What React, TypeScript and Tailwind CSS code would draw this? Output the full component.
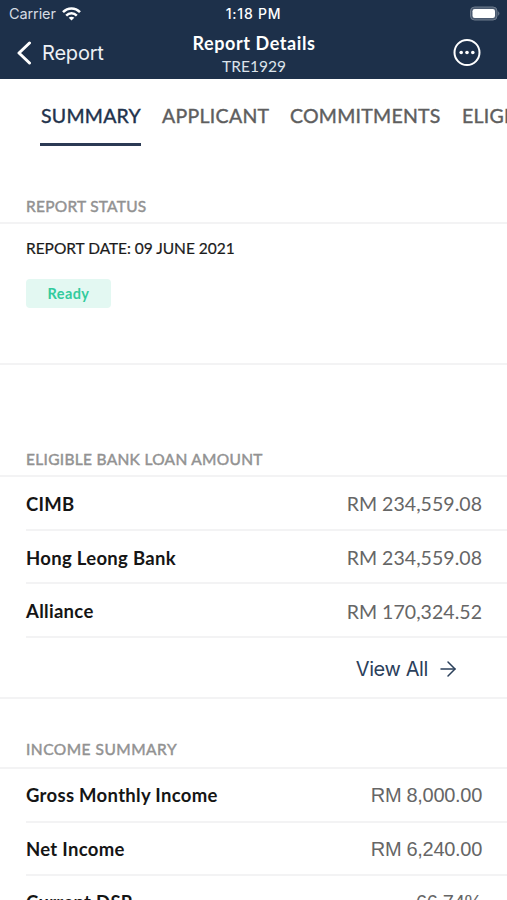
import { ArrowRight } from 'lucide-react';

const tabs = [
  { name: 'SUMMARY', active: true, className: 'w-[101px] tracking-[0.25px] pl-px' },
  { name: 'APPLICANT', active: false, className: 'w-[107px] tracking-[0.3px]' },
  { name: 'COMMITMENTS', active: false, className: 'w-[150px] tracking-[0.25px]' },
  { name: 'ELIGIBILITY', active: false, className: 'w-[110px] tracking-[0.25px] pl-px' },
];

const banks = [
  { name: 'CIMB', amount: 'RM 234,559.08' },
  { name: 'Hong Leong Bank', amount: 'RM 234,559.08' },
  { name: 'Alliance', amount: 'RM 170,324.52' },
];

const incomes = [
  { name: 'Gross Monthly Income', amount: 'RM 8,000.00' },
  { name: 'Net Income', amount: 'RM 6,240.00' },
  { name: 'Current DSR', amount: '66.74%' },
];

const StatusBar = () => (
  <div className="flex h-[27px] items-center justify-between pl-[9px] pr-[7px]">
    <div className="flex w-[118px] items-center gap-[6px] font-['Inter',sans-serif] text-[14.5px] tracking-[-0.1px] text-[#d5dbe3]">
      Carrier
      <svg width="19" height="14" viewBox="0 0 19 14" fill="none" stroke="#fff" strokeWidth="2.5">
        <path d="M1 5.2C5.8.2 13.2.2 18 5.2" />
        <path d="M4.2 8.6c3-3 7.6-3 10.6 0" />
        <path d="M9.5 13.6 6.7 10.8c1.6-1.5 4-1.5 5.6 0Z" fill="#fff" stroke="none" />
      </svg>
    </div>
    <div className="font-['Inter',sans-serif] text-[14px] font-medium tracking-[0.75px]">1:18 PM</div>
    <div className="flex w-[120px] justify-end">
      <svg width="31" height="15" viewBox="0 0 31 15">
        <rect x="1.5" y="1" width="26.5" height="13" rx="4" fill="#4a5a70" stroke="#6d7a8c" />
        <rect x="3.5" y="3" width="22.5" height="9" rx="2.2" fill="#fff" />
        <path d="M29.3 5.3c1.4.8 1.4 3.6 0 4.4Z" fill="#7d899a" />
      </svg>
    </div>
  </div>
);

const Header = () => (
  <header className="h-[79px] bg-[#1d304a] text-white">
    <StatusBar />
    <div className="grid h-[52px] grid-cols-3 items-center pl-[16px] pr-[26px]">
      <button className="flex items-center gap-[10px] text-left font-['Inter',sans-serif] text-[20px] tracking-[-0.2px] text-[#edf1f5]">
        <svg width="16" height="24" viewBox="0 0 16 24" fill="none" stroke="#fff" strokeWidth="3" strokeLinecap="round" strokeLinejoin="round">
          <path d="M13.5 2 3 12l10.5 10" />
        </svg>
        Report
      </button>
      <div className="-mr-[11px] pt-[4px] text-center font-['Lato',sans-serif]">
        <h1 className="whitespace-nowrap text-[18px] font-bold leading-[22px] tracking-[0.6px]">Report Details</h1>
        <p className="text-[15.5px] leading-[24px] text-[#dce3eb]">TRE1929</p>
      </div>
      <div className="flex justify-end">
        <svg width="28" height="28" viewBox="0 0 28 28" fill="none" stroke="#fff" strokeWidth="2">
          <circle cx="14" cy="13.5" r="12.5" />
          <g fill="#fff" stroke="none">
            <circle cx="8.2" cy="13.5" r="1.8" />
            <circle cx="14" cy="13.5" r="1.8" />
            <circle cx="19.8" cy="13.5" r="1.8" />
          </g>
        </svg>
      </div>
    </div>
  </header>
);

const SectionTitle = ({ title, className }: { title: string; className: string }) => (
  <h2 className={`flex items-end border-b-2 border-[#f3f3f4] pl-[26px] text-[15.5px] leading-[20px] text-[#929292] [-webkit-text-stroke:0.45px_#929292] ${className}`}>
    {title}
  </h2>
);

const Row = ({ name, amount, className, amountClass }: { name: string; amount: string; className: string; amountClass: string }) => (
  <div className={`ml-[26px] flex h-[53.7px] items-center justify-between border-b-2 border-[#f3f3f4] pr-[25px] ${className}`}>
    <span className="text-[18.5px] font-bold tracking-[0.3px] text-[#151515]">{name}</span>
    <span className={`text-[#666] ${amountClass}`}>{amount}</span>
  </div>
);

const App = () => {
  return (
    <div className="h-[900px] w-[507px] overflow-hidden bg-white font-['Lato',sans-serif]">
      <Header />

      {/* Tabs */}
      <nav className="flex h-[68px] gap-[21px] overflow-hidden pl-[40px] pt-[23px]">
        {tabs.map((tab) => (
          <div
            key={tab.name}
            className={`h-[44px] shrink-0 whitespace-nowrap text-[19.5px] leading-[27px] [-webkit-text-stroke:0.4px] ${tab.className} ${
              tab.active ? 'border-b-[3px] border-[#2b3a54] text-[#22324c]' : 'text-[#5e5e5e]'
            }`}
          >
            {tab.name}
          </div>
        ))}
      </nav>

      {/* Report status */}
      <SectionTitle title="REPORT STATUS" className="h-[77px] pb-[6.5px] tracking-[0.25px]" />
      <div className="h-[141px] border-b-2 border-[#f3f3f4] pl-[26px] pt-[13px]">
        <p className="text-[15.5px] leading-[22px] tracking-[-0.03px] text-[#1b1b1b] [-webkit-text-stroke:0.2px]">REPORT DATE: 09 JUNE 2021</p>
        <div className="mt-[20px] flex h-[29px] w-[85px] items-center justify-center rounded-[4px] bg-[#e3f8f2] text-[14.5px] font-bold tracking-[0.4px] text-[#32cb9d]">
          Ready
        </div>
      </div>

      {/* Eligible loans */}
      <SectionTitle title="ELIGIBLE BANK LOAN AMOUNT" className="h-[112px] pb-[6px] tracking-[0.3px]" />
      {banks.map((bank) => (
        <Row key={bank.name} {...bank} className="pt-[4px]" amountClass="pb-[2px] text-[19.5px] tracking-[0.04px]" />
      ))}
      <div className="flex h-[61px] items-center justify-end gap-[10px] border-b-2 border-[#f3f3f4] pr-[47px] pt-[2px] font-['Inter',sans-serif] text-[20px] tracking-[-0.4px] text-[#2b405b]">
        View All
        <ArrowRight size={24} strokeWidth={1.5} className="-ml-[2px]" />
      </div>

      {/* Income summary */}
      <SectionTitle title="INCOME SUMMARY" className="h-[70px] pb-[8px] tracking-[0.5px]" />
      {incomes.map((income) => (
        <Row key={income.name} {...income} className="pt-[2px]" amountClass="pb-[2px] font-['Liberation_Sans',sans-serif] text-[20px] tracking-[-0.3px]" />
      ))}
    </div>
  );
};

export default App;
